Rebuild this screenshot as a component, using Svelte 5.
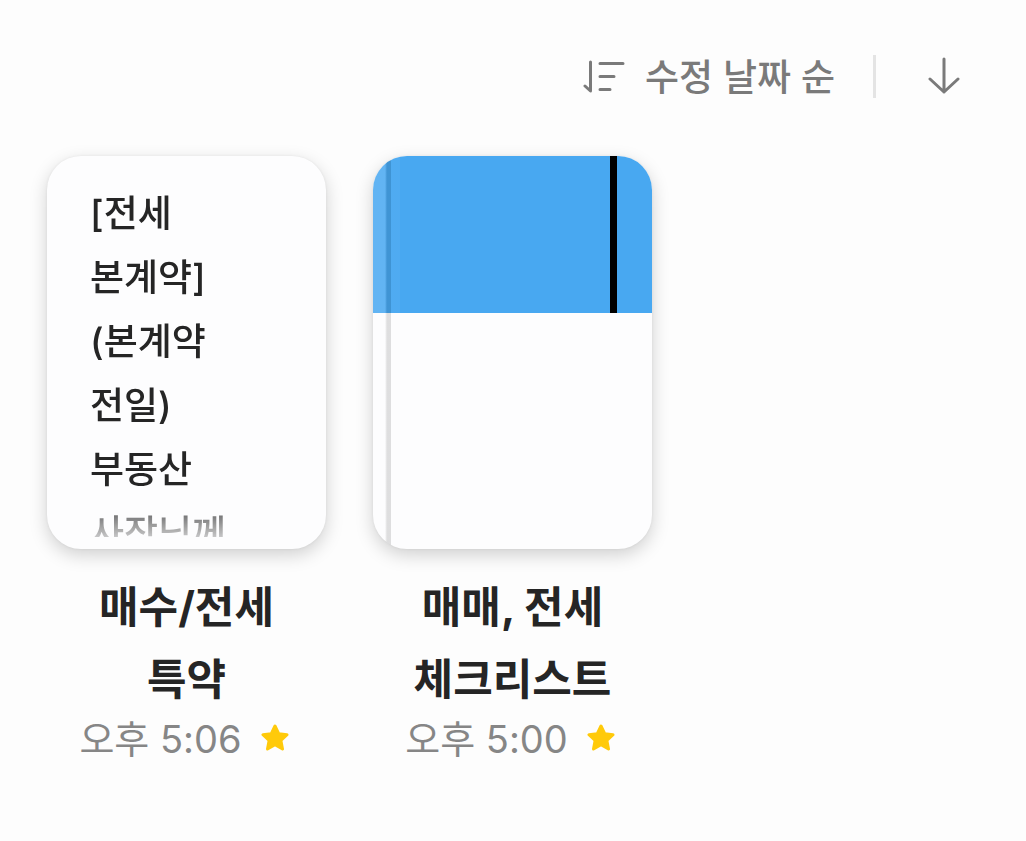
<script lang="ts">
  type Note = {
    id: number;
    title: string;
    time: string;
    preview?: string;
  };

  const notes: Note[] = [
    {
      id: 1,
      title: "매수/전세 특약",
      time: "오후 5:06",
      preview: "[전세 본계약] (본계약 전일) 부동산 사장님께",
    },
    { id: 2, title: "매매, 전세 체크리스트", time: "오후 5:00" },
  ];
</script>

<main>
  <header>
    <button class="sort" type="button">
      <svg width="42" height="36" viewBox="0 0 42 36" aria-hidden="true">
        <path d="M7.500 2v29L2 26M17 3.500h23M17 16.500h14M17 29.500h10" />
      </svg>
      수정 날짜 순
    </button>
    <span class="divider"></span>
    <button class="order" type="button" aria-label="내림차순">
      <svg width="32" height="38" viewBox="0 0 32 38" aria-hidden="true">
        <path d="M16 2v33M2 22l14 13 14-13" />
      </svg>
    </button>
  </header>

  <ul class="notes">
    {#each notes as note (note.id)}
      <li>
        <a href="#note-{note.id}">
          {#if note.preview}
            <div class="thumb page">
              <p class="preview">{note.preview}</p>
            </div>
          {:else}
            <div class="thumb">
              <div class="band"></div>
              <div class="spine"></div>
            </div>
          {/if}
          <h2>{note.title}</h2>
        </a>
        <div class="meta">
          <time>{note.time}</time>
          <svg class="star" width="30" height="30" viewBox="0 0 30 30" role="img" aria-label="즐겨찾기">
            <path d="M15 2l3.700 7.700 8.300 1-6.100 5.800 1.600 8.500-7.500-4.200-7.500 4.200 1.600-8.500L3 10.700l8.300-1z" />
          </svg>
        </div>
      </li>
    {/each}
  </ul>
</main>

<style>
  :global(body) {
    margin: 0;
    background: #fdfdfd;
  }

  main {
    font-family: Inter, "Noto Sans CJK KR", sans-serif;
    color: #252525;
    padding: 48px 47px;
  }

  header {
    display: flex;
    justify-content: flex-end;
    align-items: center;
    height: 56px;
    padding-right: 19px;
    color: #7a7a7a;
  }

  button {
    display: flex;
    align-items: center;
    margin: 0;
    padding: 0;
    border: none;
    background: none;
    color: inherit;
    font: inherit;
    cursor: pointer;
  }

  header svg {
    fill: none;
    stroke: currentColor;
    stroke-width: 3;
    stroke-linecap: round;
    stroke-linejoin: round;
  }

  .sort {
    gap: 20px;
    padding-top: 4px;
    font-size: 37px;
    font-weight: 500;
    line-height: 56px;
  }

  .divider {
    width: 3px;
    height: 43px;
    margin: 0 52px 0 38px;
    background: #e4e4e4;
  }

  .notes {
    display: flex;
    flex-wrap: wrap;
    gap: 47px;
    margin: 52px 0 0;
    padding: 0;
    list-style: none;
  }

  li {
    width: 279px;
    text-align: center;
  }

  a {
    display: block;
    color: inherit;
    text-decoration: none;
  }

  .thumb {
    position: relative;
    box-sizing: border-box;
    aspect-ratio: 279 / 393;
    border-radius: 34px;
    overflow: hidden;
    background: #fdfdfe;
    box-shadow:
      0 0 3px rgba(0, 0, 0, 0.06),
      0 6px 18px rgba(0, 0, 0, 0.18);
  }

  .page {
    padding: 26px 72px 12px 43px;
  }

  .preview {
    height: 100%;
    margin: 0;
    overflow: hidden;
    font-size: 37px;
    font-weight: 500;
    line-height: 64px;
    text-align: left;
    word-break: keep-all;
    mask-image: linear-gradient(#000 calc(100% - 44px), rgba(0, 0, 0, 0.25));
  }

  .band {
    height: 40%;
    background: linear-gradient(#000, #000) 87% 0 / 7px 100% no-repeat #48a8f1;
  }

  .spine {
    position: absolute;
    inset: 0 auto 0 0;
    width: 27px;
    background: linear-gradient(
      to right,
      rgba(255, 255, 255, 0.14) 12px,
      rgba(0, 0, 0, 0.12) 14px 18px,
      rgba(255, 255, 255, 0.04) 18px
    );
  }

  h2 {
    margin: 22px 32px 0;
    font-size: 43px;
    font-weight: 700;
    line-height: 72px;
    word-break: keep-all;
  }

  .meta {
    display: flex;
    justify-content: center;
    align-items: center;
    gap: 18px;
    padding-right: 4px;
    color: #868686;
  }

  time {
    font-size: 38px;
    font-weight: 400;
    line-height: 48px;
  }

  .star {
    fill: #ffca0a;
    stroke: #ffca0a;
    stroke-width: 3;
    stroke-linejoin: round;
  }
</style>
